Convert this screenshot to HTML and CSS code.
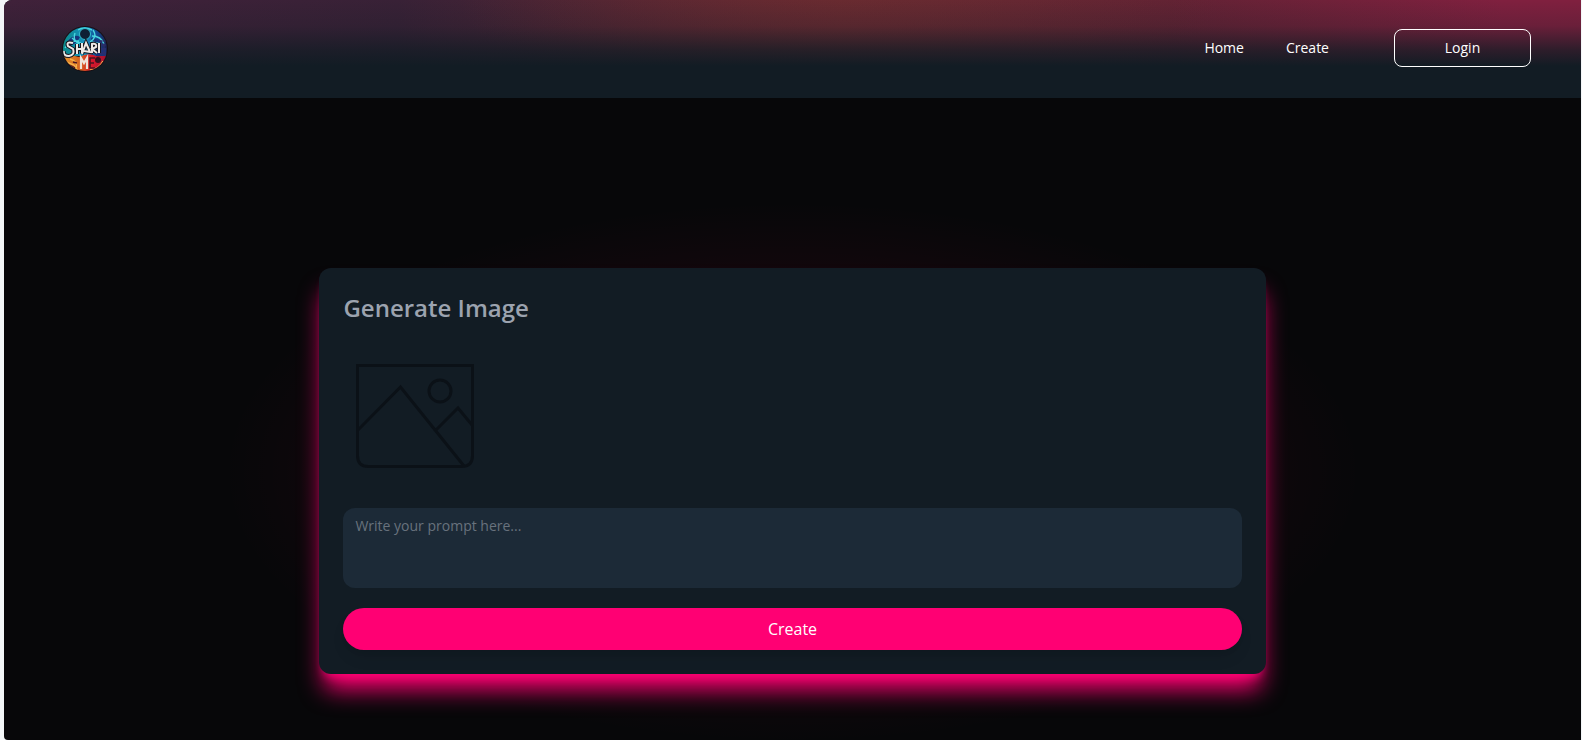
FILE: index.html
```html
<!DOCTYPE html>
<html lang="en">
<head>
<meta charset="utf-8">
<title>Share Me</title>
<link rel="stylesheet" href="styles.css">
</head>
<body>
<div class="app">
  <header class="header">
    <a class="brand" href="#" aria-label="Home page">
      <svg class="logo" viewBox="0 0 46 46" aria-hidden="true">
        <defs>
          <clipPath id="disc"><circle cx="23" cy="23" r="22"/></clipPath>
          <linearGradient id="sea" x1="0" x2="1"><stop offset="0" stop-color="#0b8a86"/><stop offset=".5" stop-color="#1690c0"/><stop offset=".75" stop-color="#124a92"/><stop offset="1" stop-color="#1a1c48"/></linearGradient>
          <linearGradient id="fire" x1="0" x2="1"><stop offset="0" stop-color="#e99a30"/><stop offset=".4" stop-color="#d4631f"/><stop offset=".65" stop-color="#d9182c"/><stop offset="1" stop-color="#9c1030"/></linearGradient>
        </defs>
        <circle cx="23" cy="23" r="23" fill="#171016"/>
        <g clip-path="url(#disc)">
          <path d="M0 0h46v30H0z" fill="url(#sea)"/>
          <path d="M0 31q9-3 17 0 10-5 17-1 6 1 12-2v18H0z" fill="url(#fire)"/>
          <path d="M5 16q7-9 13-5-3 7-11 9zM29 12q8 0 10 7l-8 1zM34 22h10v8H34z" fill="#17347a"/>
          <path d="M13 7q-3 9 6 10M31 4q5 7-3 12M3 22q5-8 14-7M30 10q9 0 12 8M16 4q6-4 14 0M30 16l9 2M10 12l7 6" fill="none" stroke="#48d5df" stroke-width="1.4"/>
          <path d="M39 14v15M42 17v13M37 15h7M37 19h7M37 23h7M37 27h7" stroke="#332d6b" stroke-width="1"/>
          <circle cx="23" cy="8" r="5.5" fill="#0e2035" stroke="#36bfd0" stroke-width="1"/>
          <path d="M4 36l8 3 4 6M8 33q8 2 6 9M28 44q9-1 13-9" fill="none" stroke="#f5b44b" stroke-width="1.4"/>
          <path d="M11 36l4 1M7 39l6 3" stroke="#4b1522" stroke-width="1.5"/>
          <circle cx="36" cy="34" r="3" fill="#35111e"/>
          <path d="M11 17q-7-2-5 3l5 3q2 6-4 7-6 0-5-5M15 18v10M20 17v10M15 23h5M20 28l4-11 4 9-6-1M30 27V18q5-1 4 3l-4 2 5 4M37 17v10" fill="none" stroke="#161821" stroke-width="4"/>
          <path d="M11 17q-7-2-5 3l5 3q2 6-4 7-6 0-5-5M15 18v10M20 17v10M15 23h5M20 28l4-11 4 9-6-1M30 27V18q5-1 4 3l-4 2 5 4M37 17v10" fill="none" stroke="#eee9e6" stroke-width="2"/>
          <path d="M19 43V32l3 5 3-5v11" fill="none" stroke="#eee2da" stroke-width="2.2"/>
          <path d="M33 32h-5v10h5M28 37h4" fill="none" stroke="#4b1522" stroke-width="1.6"/>
        </g>
      </svg>
    </a>
    <nav class="nav">
      <a class="nav-link" href="#">Home</a>
      <a class="nav-link" href="#">Create</a>
      <button class="login" type="button">Login</button>
    </nav>
  </header>
  <main class="main">
    <form class="card">
      <h1 class="title">Generate Image</h1>
      <svg class="placeholder" viewBox="0 0 118 104" role="img" aria-label="Image placeholder">
        <path d="M1.5 1.5h115v90q0 11-11 11h-93q-11 0-11-11zM2 66l42.500-43 63.500 79M80 66l22-22 14 17" fill="none" stroke="#0b1117" stroke-width="3"/>
        <circle cx="84" cy="27" r="11" fill="none" stroke="#0b1117" stroke-width="3"/>
      </svg>
      <textarea class="prompt" aria-label="Prompt" placeholder="Write your prompt here..."></textarea>
      <button class="submit" type="button">Create</button>
    </form>
  </main>
</div>
</body>
</html>
```
FILE: styles.css
```css
* { box-sizing: border-box; }
body {
  margin: 0;
  padding: 0 1px 0 4px;
  background: #f3f6f8;
  font-family: "Open Sans", "Noto Sans", sans-serif;
}
.app {
  display: flex;
  flex-direction: column;
  min-height: 100vh;
  overflow: hidden;
  border-radius: 8px 0 0 4px;
  background: #070709;
}
.header {
  display: flex;
  align-items: flex-start;
  justify-content: space-between;
  padding: 26px 50px 26px 58px;
  background:
    linear-gradient(to bottom, rgba(18, 28, 36, 0) 0, rgba(18, 28, 36, 0.2) 26px, rgba(18, 28, 36, 0.75) 50px, rgba(18, 28, 36, 1) 66px),
    radial-gradient(ellipse 380px 110px at 53% 0, rgba(106, 43, 47, 0.8), rgba(106, 43, 47, 0)),
    linear-gradient(to right, #40213a 0, #382136 25%, #4c2434 38%, #642834 53%, #622234 74%, #80203f 95%, #80203f 100%);
}
.brand { display: flex; }
.logo { width: 46px; height: 46px; }
.nav { display: flex; align-items: center; gap: 42px; padding-top: 3px; }
.nav-link {
  padding-bottom: 1px;
  color: #fff;
  font-size: 14px;
  font-weight: 500;
  text-decoration: none;
}
.login {
  width: 137px;
  height: 38px;
  padding: 0 6px 2px;
  margin-left: 23px;
  border: 1px solid #fff;
  border-radius: 8px;
  background: transparent;
  color: #fff;
  font: 400 14px "Open Sans", sans-serif;
}
.main {
  flex: 1;
  display: flex;
  flex-direction: column;
  align-items: center;
  justify-content: flex-end;
  padding-bottom: 66px;
  background: radial-gradient(ellipse 570px 270px at 50% 374px, rgba(255, 0, 80, 0.16), rgba(255, 0, 80, 0));
}
.card {
  display: flex;
  flex-direction: column;
  width: 60%;
  padding: 24px;
  border-radius: 12px;
  background: #121c24;
  box-shadow: 0 20px 25px -5px #ff0073, 0 8px 10px -6px #ff0073;
}
.title {
  margin: 0;
  color: #9ca3af;
  font-size: 24px;
  font-weight: 600;
  line-height: 32px;
}
.placeholder {
  width: 118px;
  height: 104px;
  margin: 40px 13px;
}
.prompt {
  height: 80px;
  padding: 8px 12px;
  border: 0;
  border-radius: 12px;
  resize: none;
  background: #1c2a37;
  color: #fff;
  font: 400 14px/20px "Open Sans", sans-serif;
}
.prompt::placeholder { color: #68727d; }
.submit {
  height: 42px;
  margin-top: 20px;
  border: 0;
  border-radius: 21px;
  background: #ff0073;
  color: #fff;
  font: 400 16px "Open Sans", sans-serif;
  box-shadow: 0 10px 15px -3px rgba(0, 0, 0, 0.1), 0 4px 6px -2px rgba(0, 0, 0, 0.05);
}
```
